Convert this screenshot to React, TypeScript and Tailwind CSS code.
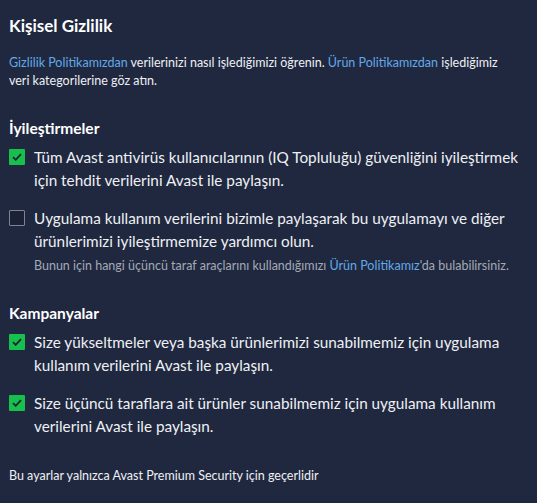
const font = { fontFamily: 'Lato, "Noto Sans", sans-serif' };

function CheckBox({ checked }: { checked: boolean }) {
  return checked ? (
    <span className="mt-[3px] flex h-[16px] w-[16px] shrink-0 items-center justify-center rounded-[1px] bg-[#17c04c]">
      <svg width="10" height="8" viewBox="0 0 10 8" fill="none">
        <path d="M1 4.2 3.7 6.8 9 1.2" stroke="#1b2238" strokeWidth="1.8" />
      </svg>
    </span>
  ) : (
    <span className="mt-[3px] h-[16px] w-[16px] shrink-0 rounded-[1px] border border-[#7c8396] bg-[#1b2236]" />
  );
}

function Option({
  checked,
  children,
  note,
}: {
  checked: boolean;
  children: React.ReactNode;
  note?: React.ReactNode;
}) {
  return (
    <div className="flex gap-[9px]">
      <CheckBox checked={checked} />
      <div>
        <p className="text-[15.3px] leading-[23px] text-[#eef0f4]">{children}</p>
        {note && <p className="mt-[4px] text-[12.5px] leading-[18px] text-[#a3a8b6]">{note}</p>}
      </div>
    </div>
  );
}

export default function App() {
  return (
    <div className="h-[503px] w-[537px] bg-[#20283f] px-[9px] pt-[14px]" style={font}>
      <h1 className="text-[17px] font-bold leading-[24px] text-white">Kişisel Gizlilik</h1>
      <p className="mt-[16px] max-w-[500px] text-[12.5px] leading-[18px] text-[#eef0f4]">
        <span className="text-[#62a9e9]">Gizlilik Politikamızdan</span> verilerinizi nasıl işlediğimizi öğrenin.{' '}
        <span className="text-[#62a9e9]">Ürün Politikamızdan</span> işlediğimiz veri kategorilerine göz atın.
      </p>

      <h2 className="mt-[28px] text-[15.5px] font-bold leading-[20px] text-white">İyileştirmeler</h2>
      <div className="mt-[8px] flex flex-col gap-[15px]">
        <Option checked>
          Tüm Avast antivirüs kullanıcılarının (IQ Topluluğu) güvenliğini iyileştirmek için tehdit verilerini Avast ile paylaşın.
        </Option>
        <Option
          checked={false}
          note={
            <>
              Bunun için hangi üçüncü taraf araçlarını kullandığımızı <span className="text-[#62a9e9]">Ürün Politikamız</span>'da bulabilirsiniz.
            </>
          }
        >
          Uygulama kullanım verilerini bizimle paylaşarak bu uygulamayı ve diğer ürünlerimizi iyileştirmemize yardımcı olun.
        </Option>
      </div>

      <h2 className="mt-[28px] text-[15.5px] font-bold leading-[20px] text-white">Kampanyalar</h2>
      <div className="mt-[8px] flex flex-col gap-[15px]">
        <Option checked>
          Size yükseltmeler veya başka ürünlerimizi sunabilmemiz için uygulama kullanım verilerini Avast ile paylaşın.
        </Option>
        <Option checked>
          Size üçüncü taraflara ait ürünler sunabilmemiz için uygulama kullanım verilerini Avast ile paylaşın.
        </Option>
      </div>

      <p className="mt-[29px] text-[12.5px] leading-[18px] text-[#eef0f4]">Bu ayarlar yalnızca Avast Premium Security için geçerlidir</p>
    </div>
  );
}
